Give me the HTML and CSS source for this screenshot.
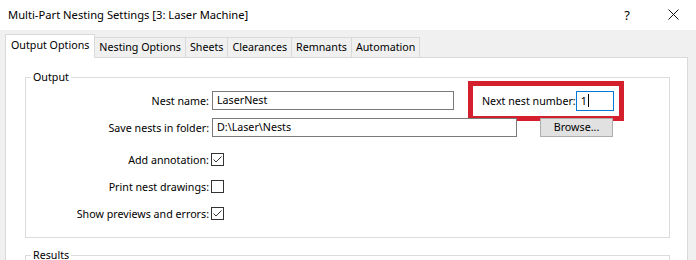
FILE: index.html
```html
<!DOCTYPE html>
<html lang="en">

<head>
    <meta charset="UTF-8">
    <title>Multi-Part Nesting Settings</title>
    <link rel="stylesheet" href="styles.css">
</head>

<body>
    <header class="titlebar">
        <span class="title">Multi-Part Nesting Settings [3: Laser Machine]</span>
        <span class="caption-btn">?</span>
        <span class="caption-btn">
            <svg width="11" height="11" viewBox="0 0 11 11">
                <path d="M0.5 0.5 L10.5 10.5 M10.5 0.5 L0.5 10.5" stroke="#111" stroke-width="1" fill="none" />
            </svg>
        </span>
    </header>

    <div class="dialog">
        <div class="tabs">
            <div class="tab active">Output Options</div>
            <div class="tab">Nesting Options</div>
            <div class="tab">Sheets</div>
            <div class="tab">Clearances</div>
            <div class="tab">Remnants</div>
            <div class="tab">Automation</div>
        </div>

        <div class="panel">
            <fieldset class="group">
                <legend>Output</legend>

                <div class="rows">
                    <div class="label">Nest name:</div>
                    <div class="ctl">
                        <div class="field name-field">LaserNest</div>
                        <div class="highlight">
                            <span class="label">Next nest number:</span>
                            <div class="field num-field focused">1<i class="caret"></i></div>
                        </div>
                    </div>

                    <div class="label">Save nests in folder:</div>
                    <div class="ctl">
                        <div class="field folder-field">D:\Laser\Nests</div>
                        <div class="button">Browse...</div>
                    </div>
                </div>

                <div class="rows checks">
                    <div class="label">Add annotation:</div>
                    <div class="ctl">
                        <span class="checkbox">
                            <svg width="11" height="11" viewBox="0 0 11 11">
                                <path d="M1.5 5.5 L4 8 L9.5 2.5" stroke="#333" stroke-width="1" fill="none" />
                            </svg>
                        </span>
                    </div>

                    <div class="label">Print nest drawings:</div>
                    <div class="ctl"><span class="checkbox"></span></div>

                    <div class="label">Show previews and errors:</div>
                    <div class="ctl">
                        <span class="checkbox">
                            <svg width="11" height="11" viewBox="0 0 11 11">
                                <path d="M1.5 5.5 L4 8 L9.5 2.5" stroke="#333" stroke-width="1" fill="none" />
                            </svg>
                        </span>
                    </div>
                </div>
            </fieldset>

            <fieldset class="group results">
                <legend>Results</legend>
                <div class="results-body"></div>
            </fieldset>
        </div>
    </div>
</body>

</html>
```

FILE: styles.css
```css
* {
    box-sizing: border-box;
    margin: 0;
    padding: 0;
}

body {
    width: 696px;
    height: 260px;
    overflow: hidden;
    background-color: #f0f0f0;
    color: #000;
    font-family: "Noto Sans", "Open Sans", sans-serif;
    font-size: 10.7px;
}

.titlebar {
    height: 30px;
    background-color: #fff;
    display: flex;
    align-items: center;
    padding-left: 8px;
    padding-bottom: 1px;
    font-size: 11.2px;
}

.title {
    flex: 1;
}

.caption-btn {
    width: 46px;
    display: flex;
    justify-content: center;
    align-items: center;
    font-size: 13px;
}

.dialog {
    padding: 4px 8px 0 5px;
}

/* tab strip */
.tabs {
    display: flex;
    align-items: flex-end;
    height: 24px;
    margin-bottom: -1px;
    position: relative;
    z-index: 1;
}

.tab {
    height: 20px;
    margin-bottom: 1px;
    margin-left: -1px;
    padding: 0 4px;
    line-height: 19px;
    border: 1px solid #d9d9d9;
    border-bottom: none;
    background-color: #f0f0f0;
    white-space: nowrap;
}

.tab.active {
    height: 24px;
    margin-bottom: 0;
    margin-left: 0;
    padding: 0 5px;
    line-height: 20px;
    background-color: #fff;
}

.panel {
    height: 210px;
    background-color: #fff;
    border: 1px solid #d9d9d9;
    padding: 11px 17px 0 19px;
}

/* group boxes */
.group {
    border: 1px solid #dcdcdc;
    padding: 2px 0 10px 0;
}

.group legend {
    margin-left: 5px;
    padding: 0 2px;
    line-height: 16px;
}

.results {
    margin-top: 9px;
}

.results-body {
    height: 40px;
}

.rows {
    display: grid;
    grid-template-columns: 183px 1fr;
    grid-auto-rows: 27px;
    column-gap: 3px;
    align-items: center;
}

.checks {
    margin-top: 5px;
    column-gap: 2px;
}

.label {
    text-align: right;
    white-space: nowrap;
}

.ctl {
    display: flex;
    align-items: center;
}

.field {
    height: 19px;
    border: 1px solid #7a7a7a;
    padding-left: 4px;
    line-height: 17px;
    background-color: #fff;
    white-space: nowrap;
}

.name-field {
    width: 242px;
}

.folder-field {
    width: 305px;
}

.button {
    width: 73px;
    height: 19px;
    margin-left: 23px;
    border: 1px solid #adadad;
    background-color: #e1e1e1;
    text-align: center;
    line-height: 17px;
}

/* red annotation box round the next nest number */
.highlight {
    width: 156px;
    height: 40px;
    margin-left: 14px;
    border: 5px solid #d3202c;
    display: flex;
    align-items: center;
    justify-content: space-between;
    padding: 0 5px 0 9px;
    flex-shrink: 0;
}

.num-field {
    width: 39px;
    height: 20px;
    line-height: 18px;
}

.focused {
    border-color: #0078d7;
}

.caret {
    display: inline-block;
    width: 1px;
    height: 13px;
    margin-left: 1px;
    vertical-align: -2px;
    background-color: #000;
}

.checkbox {
    width: 13px;
    height: 13px;
    border: 1px solid #333;
    display: flex;
    align-items: center;
    justify-content: center;
}
```
